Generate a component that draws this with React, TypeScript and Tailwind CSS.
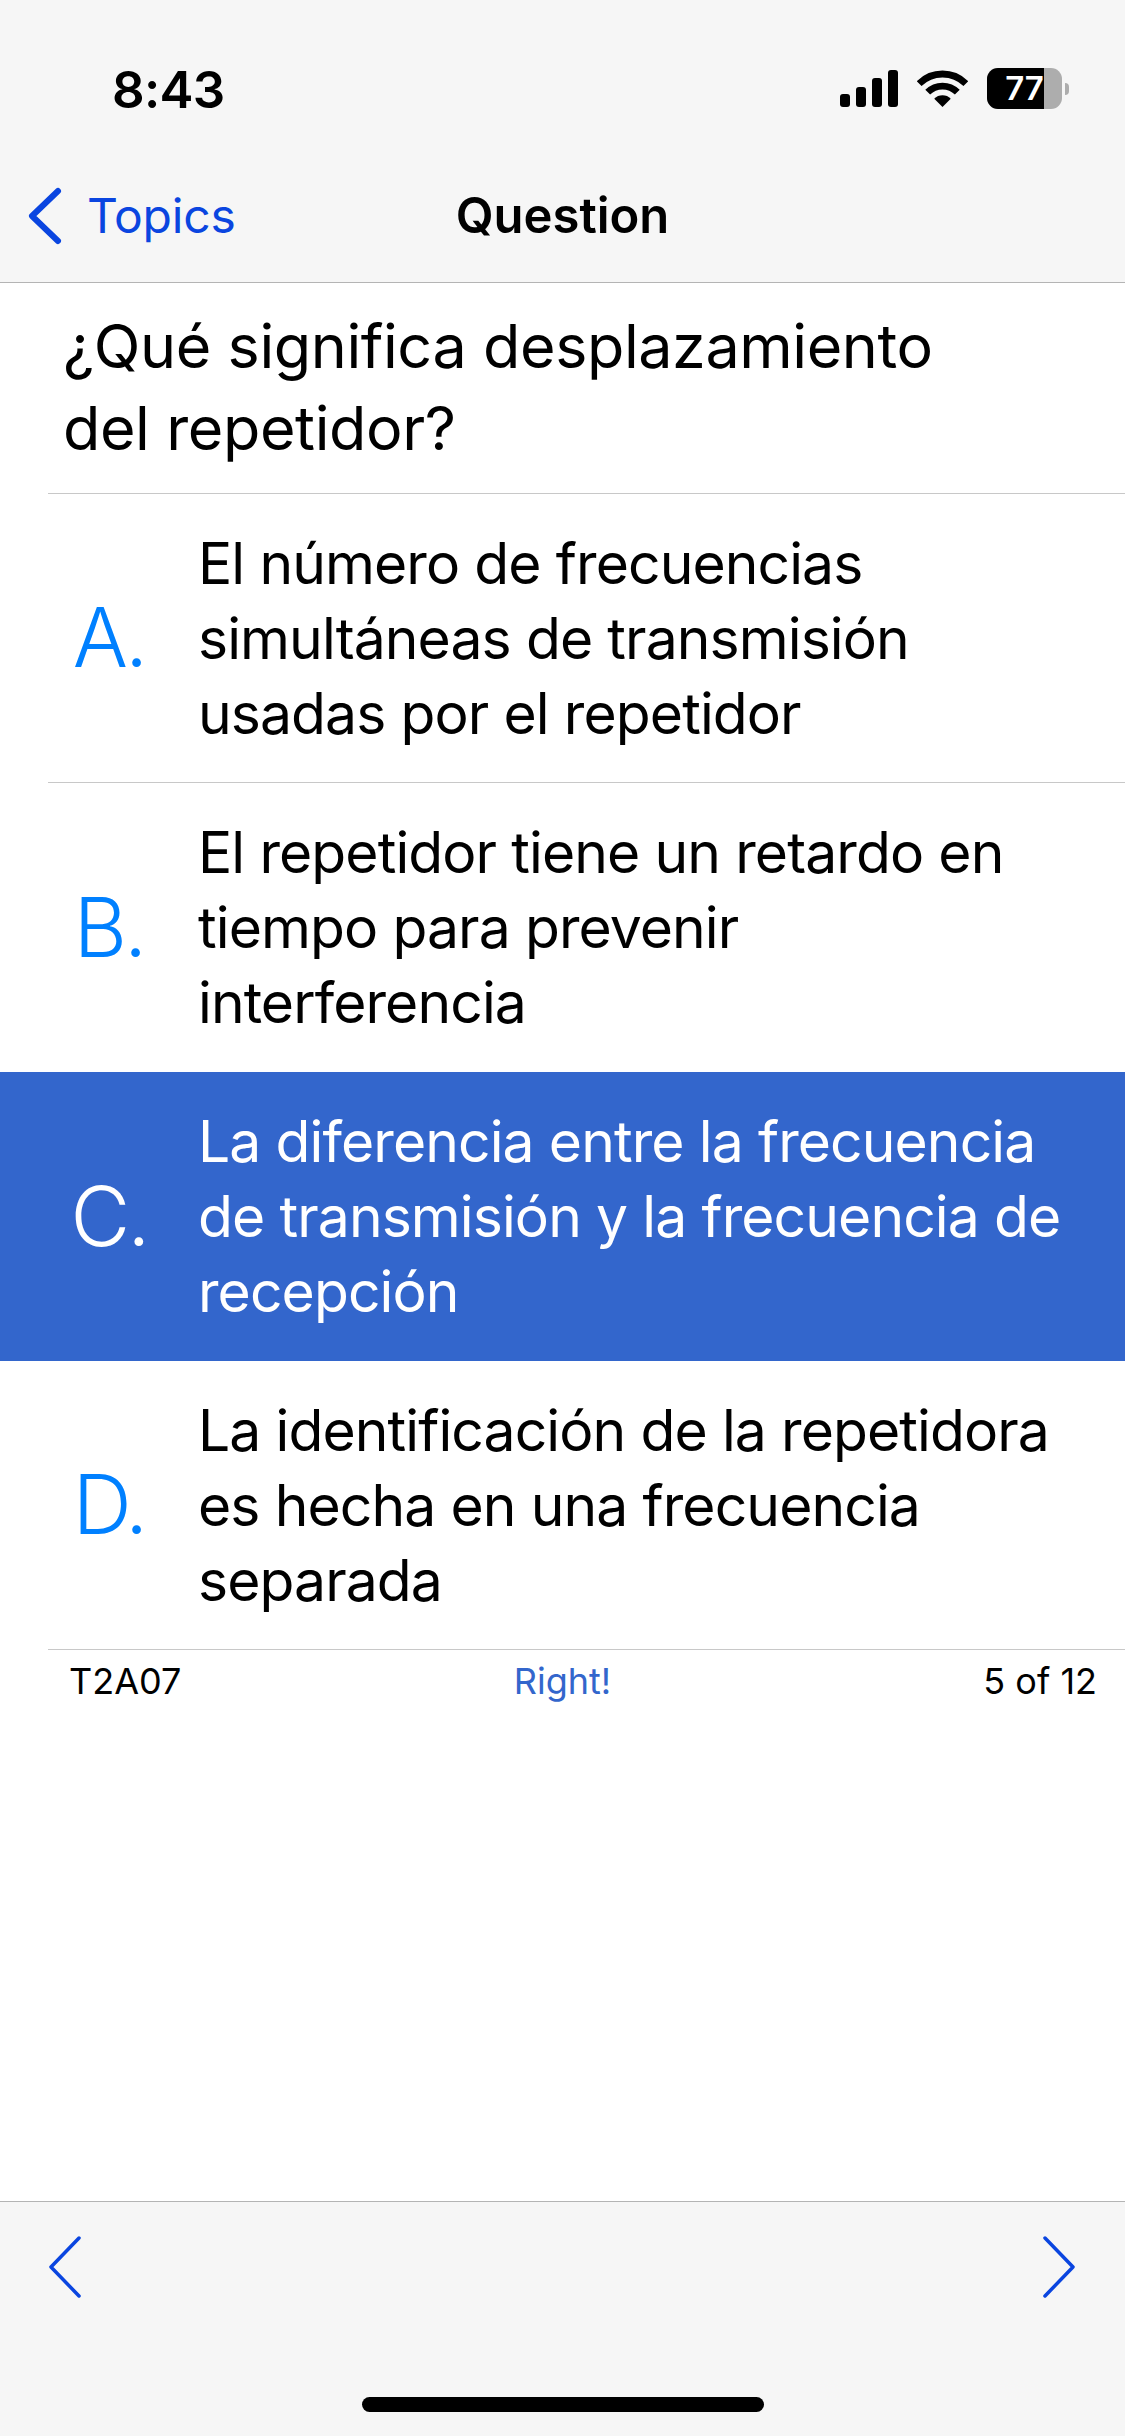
const font = { fontFamily: "Inter, sans-serif" };

const answers = [
  { letter: "A.", lines: ["El número de frecuencias", "simultáneas de transmisión", "usadas por el repetidor"], line: true },
  { letter: "B.", lines: ["El repetidor tiene un retardo en", "tiempo para prevenir", "interferencia"] },
  { letter: "C.", lines: ["La diferencia entre la frecuencia", "de transmisión y la frecuencia de", "recepción"], selected: true },
  { letter: "D.", lines: ["La identificación de la repetidora", "es hecha en una frecuencia", "separada"], line: true },
];

const Chevron = ({ right = false }: { right?: boolean }) => (
  <svg width="34" height="62" viewBox="0 0 34 62" fill="none" className="block">
    <path
      d={right ? "M3 2 L31 31 L3 60" : "M31 2 L3 31 L31 60"}
      stroke="#0a45e0"
      strokeWidth="3.5"
      strokeLinecap="round"
      strokeLinejoin="round"
    />
  </svg>
);

const StatusIcons = () => (
  <div className="flex items-center gap-[19px]">
    <svg width="58" height="37" viewBox="0 0 58 37" className="block">
      <rect x="0" y="24" width="10" height="13" rx="3" />
      <rect x="16" y="17" width="10" height="20" rx="3" />
      <rect x="32" y="8" width="10" height="29" rx="3" />
      <rect x="48" y="0" width="10" height="37" rx="3" />
    </svg>
    <svg width="51" height="37" viewBox="0 0 52 38" className="block">
      <path d="M26 38 L17.5 29.5 A12 12 0 0 1 34.5 29.5 Z" />
      <path d="M10.8 22.8 A21.5 21.5 0 0 1 41.2 22.8" fill="none" stroke="#000" strokeWidth="7" />
      <path d="M2 14 A34 34 0 0 1 50 14" fill="none" stroke="#000" strokeWidth="7" />
    </svg>
    <div className="flex items-center">
      <div className="relative w-[75px] h-[41px] rounded-[11px] overflow-hidden bg-[#adadad]">
        <div className="absolute inset-y-0 left-0 w-[57px] bg-black" />
        <span className="absolute inset-0 flex items-center justify-center text-white text-[33px] font-semibold leading-none" style={font}>
          77
        </span>
      </div>
      <div className="w-[4px] h-[12px] rounded-r-full bg-[#adadad] ml-[3px]" />
    </div>
  </div>
);

export default function App() {
  return (
    <div className="w-[1125px] h-[2436px] flex flex-col bg-white text-black" style={font}>
      {/* Status + nav */}
      <header className="h-[283px] shrink-0 bg-[#f6f6f6] border-b border-[#b4b4b4] flex flex-col">
        <div className="h-[178px] pl-[112px] pr-[56px] pt-[60px] flex items-start justify-between">
          <span className="text-[51px] leading-[60px] font-semibold tracking-[-0.7px]">8:43</span>
          <div className="pt-[8px]"><StatusIcons /></div>
        </div>
        <div className="relative flex items-center justify-center h-[76px]">
          <div className="absolute left-[27px] inset-y-0 flex items-center gap-[24px] text-[#0a45e0]">
            <svg width="36" height="60" viewBox="0 0 36 60" fill="none" className="block">
              <path d="M31 5 L5 30 L31 55" stroke="#0a45e0" strokeWidth="6" strokeLinecap="round" strokeLinejoin="round" />
            </svg>
            <span className="text-[48px] leading-[60px] tracking-[-0.2px]">Topics</span>
          </div>
          <span className="text-[49px] leading-[60px] font-semibold">Question</span>
        </div>
      </header>

      {/* Question */}
      <div className="ml-[48px] h-[211px] shrink-0 border-b border-[#c8c8c8] pt-[22px] pl-[15px]">
        <h1 className="text-[61px] leading-[82px] tracking-[-0.4px] font-normal">
          ¿Qué significa desplazamiento
          <br />
          del repetidor?
        </h1>
      </div>

      {/* Answers */}
      <div className="shrink-0">
        {answers.map((a) => (
          <div key={a.letter} className={a.selected ? "bg-[#3366cc] text-white" : ""}>
            <div className={"h-[289px] ml-[48px] flex items-center " + (a.line ? "border-b border-[#c8c8c8]" : "")}>
              <span
                className={
                  "w-[122px] mr-[28px] shrink-0 text-center text-[82px] leading-none tracking-[-3px] font-[350] " +
                  (a.selected ? "text-white" : "text-[#0080ff]")
                }
              >
                {a.letter}
              </span>
              <div className="text-[57px] leading-[75px] tracking-[-0.9px]">
                {a.lines.map((l) => (
                  <div key={l} className="whitespace-nowrap">{l}</div>
                ))}
              </div>
            </div>
          </div>
        ))}
      </div>

      {/* Footer line */}
      <div className="relative flex justify-between pl-[69px] pr-[28px] pt-[10px] text-[36px] leading-[42px] shrink-0">
        <span>T2A07</span>
        <span className="absolute left-0 right-0 text-center text-[#3366cc]">Right!</span>
        <span>5 of 12</span>
      </div>

      <div className="flex-1" />

      {/* Toolbar */}
      <footer className="h-[235px] shrink-0 bg-[#f6f6f6] border-t border-[#b4b4b4] relative">
        <div className="flex justify-between pl-[48px] pr-[49px] pt-[34px]">
          <Chevron />
          <Chevron right />
        </div>
        <div className="absolute left-[362px] bottom-[24px] w-[402px] h-[15px] rounded-full bg-black" />
      </footer>
    </div>
  );
}
